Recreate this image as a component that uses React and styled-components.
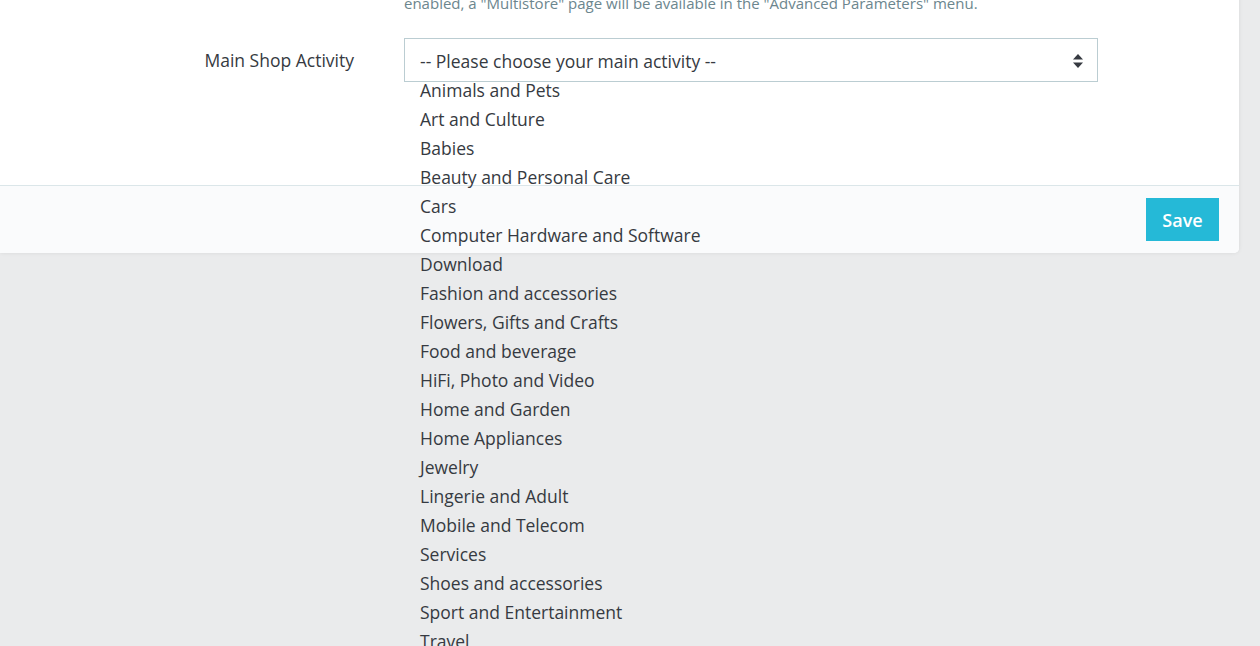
import React from "react";
import styled, { createGlobalStyle } from "styled-components";

const Global = createGlobalStyle`
  html, body { margin: 0; padding: 0; }
  body {
    background: #eaebec;
    font-family: "Open Sans", "Noto Sans", sans-serif;
    color: #363a41;
    overflow: hidden;
    height: 646px;
  }
`;

const Page = styled.div`
  width: 1260px;
  height: 646px;
  overflow: hidden;
`;

const Card = styled.div`
  width: 1239px;
  margin-top: -8px;
  background: #fff;
  border-radius: 0 0 5px 0;
  box-shadow: 0 0 4px 0 rgba(0, 0, 0, 0.08);
`;

const Body = styled.div`
  height: 193px;
`;

const Hint = styled.p`
  margin: 0 0 0 404px;
  font-size: 15px;
  line-height: 22px;
  color: #6c868e;
`;

const FormRow = styled.div`
  display: grid;
  grid-template-columns: 354px 694px;
  column-gap: 50px;
  align-items: center;
  margin-top: 24px;
`;

const Label = styled.label`
  text-align: right;
  font-size: 17.5px;
  color: #363a41;
`;

const SelectWrap = styled.div`
  position: relative;
`;

const SelectBox = styled.div`
  display: flex;
  align-items: center;
  justify-content: space-between;
  box-sizing: border-box;
  height: 44px;
  padding: 2px 14px 0 15px;
  border: 1px solid #bbcdd2;
  font-size: 17.5px;
  color: #363a41;
  background: #fff;
`;

const Options = styled.ul`
  position: absolute;
  top: 38px;
  left: 0;
  margin: 0;
  padding: 0 0 0 16px;
  list-style: none;
  z-index: 10;
`;

const Option = styled.li`
  font-size: 17.5px;
  line-height: 29px;
  height: 29px;
  color: #363a41;
  white-space: nowrap;
`;

const Footer = styled.div`
  display: flex;
  justify-content: flex-end;
  padding: 12px 20px 12px 0;
  background: #fafbfc;
  border-top: 1px solid #dbe6e9;
  border-radius: 0 0 5px 0;
`;

const SaveButton = styled.button`
  width: 73px;
  height: 43px;
  border: none;
  background: #25b9d7;
  color: #fff;
  font-family: "Open Sans", sans-serif;
  font-size: 18px;
  font-weight: 600;
  cursor: pointer;
`;

const SortIcon = () => (
  <svg width="10" height="14" viewBox="0 0 10 14">
    <path d="M5 0 L10 5.5 L0 5.5 Z" fill="#363a41" />
    <path d="M0 8.5 L10 8.5 L5 14 Z" fill="#363a41" />
  </svg>
);

const activities = [
  "Animals and Pets",
  "Art and Culture",
  "Babies",
  "Beauty and Personal Care",
  "Cars",
  "Computer Hardware and Software",
  "Download",
  "Fashion and accessories",
  "Flowers, Gifts and Crafts",
  "Food and beverage",
  "HiFi, Photo and Video",
  "Home and Garden",
  "Home Appliances",
  "Jewelry",
  "Lingerie and Adult",
  "Mobile and Telecom",
  "Services",
  "Shoes and accessories",
  "Sport and Entertainment",
  "Travel",
];

export default function App() {
  return (
    <>
      <Global />
      <Page>
        <Card>
          <Body>
            <Hint>
              enabled, a "Multistore" page will be available in the "Advanced Parameters" menu.
            </Hint>
            <FormRow>
              <Label>Main Shop Activity</Label>
              <SelectWrap>
                <SelectBox>
                  <span>-- Please choose your main activity --</span>
                  <SortIcon />
                </SelectBox>
                <Options>
                  {activities.map((a) => (
                    <Option key={a}>{a}</Option>
                  ))}
                </Options>
              </SelectWrap>
            </FormRow>
          </Body>
          <Footer>
            <SaveButton>Save</SaveButton>
          </Footer>
        </Card>
      </Page>
    </>
  );
}
